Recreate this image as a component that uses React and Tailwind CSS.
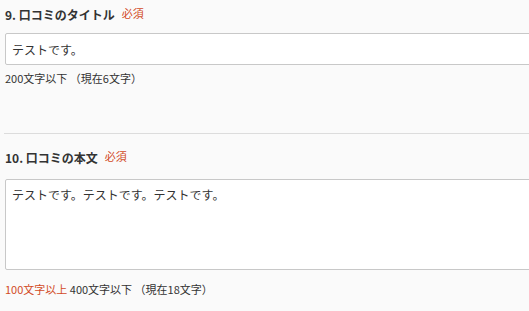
import React from "react";

function Required() {
  return <span className="ml-[7px] text-[11px] font-normal text-[#d24a1f] relative -top-[2px]">必須</span>;
}

export default function App() {
  return (
    <div
      className="w-[529px] h-[311px] overflow-hidden bg-[#fafafa] text-[#333]"
      style={{ fontFamily: '"Noto Sans CJK JP", "Noto Sans", sans-serif' }}
    >
      <section className="pl-[5px] pt-[5px] h-[133px]">
        <h3 className="h-[20px] flex items-center text-[12px] font-bold leading-none">
          9. 口コミのタイトル<Required />
        </h3>
        <input
          readOnly
          value="テストです。"
          className="mt-[8px] block w-[560px] h-[32px] px-[6px] bg-white border border-[#c8c8c8] rounded-[2px] text-[12px] text-[#333] outline-none"
        />
        <p className="mt-[6px] text-[11px] leading-[14px]">200文字以下 （現在6文字）</p>
      </section>
      <div className="ml-[4px] border-t border-[#dcdcdc]" />
      <section className="pl-[5px] pt-[14px]">
        <h3 className="h-[20px] flex items-center text-[12px] font-bold leading-none">
          10. 口コミの本文<Required />
        </h3>
        <textarea
          readOnly
          value="テストです。テストです。テストです。"
          className="mt-[11px] block w-[560px] h-[91px] px-[6px] py-[6px] bg-white border border-[#c8c8c8] rounded-[2px] text-[12px] text-[#333] resize-none outline-none"
        />
        <p className="mt-[12px] text-[11px] leading-[14px]">
          <span className="text-[#d24a1f]">100文字以上</span> 400文字以下 （現在18文字）
        </p>
      </section>
    </div>
  );
}
